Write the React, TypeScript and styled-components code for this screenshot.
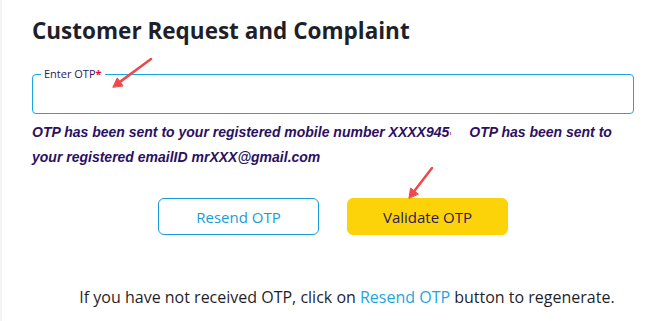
import React from 'react';
import styled, { createGlobalStyle } from 'styled-components';

const GlobalStyle = createGlobalStyle`
  html, body {
    margin: 0;
    padding: 0;
    background: #ffffff;
  }
  body {
    font-family: 'Open Sans', 'Noto Sans', sans-serif;
  }
`;

const Page = styled.div`
  position: relative;
  width: 655px;
  height: 321px;
  box-sizing: border-box;
  border-left: 2px solid #f5f5f5;
  padding: 15px 21px 0 30px;
  overflow: hidden;
`;

const Title = styled.h2`
  margin: 0;
  font-size: 22.5px;
  line-height: 32px;
  font-weight: 700;
  color: #1f1f2b;
`;

const OtpField = styled.fieldset`
  margin: 21px 0 0;
  padding: 0 10px;
  height: 46px;
  box-sizing: border-box;
  border: 1.5px solid #1ba6e0;
  border-radius: 4px;
`;

const Legend = styled.legend`
  padding: 0 3px;
  margin-left: -2px;
  font-size: 11px;
  line-height: 12px;
  color: #2a1a5e;

  span {
    color: #e0103a;
    font-weight: 700;
  }
`;

const Message = styled.p`
  margin: 6px 0 0;
  font-family: 'Liberation Sans', Arial, sans-serif;
  font-style: italic;
  font-weight: 700;
  font-size: 14px;
  line-height: 25px;
  color: #2b1062;

  .tick {
    display: inline-block;
    width: 1px;
    height: 3px;
    margin: 0 1px;
    background: #e06a8a;
    vertical-align: middle;
  }

  .gap {
    display: inline-block;
    width: 17px;
  }
`;

const Actions = styled.div`
  display: flex;
  justify-content: center;
  gap: 28px;
  margin-top: 28px;
`;

const Button = styled.button<{ $primary?: boolean }>`
  width: 161px;
  height: 37px;
  box-sizing: border-box;
  border-radius: 6px;
  font-family: 'Open Sans', 'Noto Sans', sans-serif;
  font-size: 15px;
  cursor: pointer;
  border: 1px solid ${(p) => (p.$primary ? '#fcd308' : '#1a9bd7')};
  background: ${(p) => (p.$primary ? '#fcd308' : '#ffffff')};
  color: ${(p) => (p.$primary ? '#2a1a5e' : '#1a9bd7')};
`;

const Hint = styled.p`
  margin: 51px 0 0;
  padding-left: 28px;
  text-align: center;
  font-size: 16px;
  line-height: 22px;
  color: #1f1f2b;

  a {
    color: #1ba6e0;
    text-decoration: none;
  }
`;

const Annotation = styled.svg`
  position: absolute;
  left: 0;
  top: 0;
  pointer-events: none;
`;

const Arrow = ({ x1, y1, x2, y2 }: { x1: number; y1: number; x2: number; y2: number }) => {
  const a = Math.atan2(y2 - y1, x2 - x1);
  const len = 10;
  const w = 0.5;
  const p1 = [x2 - len * Math.cos(a - w), y2 - len * Math.sin(a - w)];
  const p2 = [x2 - len * Math.cos(a + w), y2 - len * Math.sin(a + w)];
  return (
    <g stroke="#f04848" strokeWidth={2.5} strokeLinecap="round" fill="#f04848">
      <line x1={x1} y1={y1} x2={x2 - 4 * Math.cos(a)} y2={y2 - 4 * Math.sin(a)} />
      <polygon points={`${x2},${y2} ${p1[0]},${p1[1]} ${p2[0]},${p2[1]}`} strokeLinejoin="round" strokeWidth={1} />
    </g>
  );
};

export default function App() {
  return (
    <>
      <GlobalStyle />
      <Page>
        <Title>Customer Request and Complaint</Title>
        <OtpField>
          <Legend>
            Enter OTP<span>*</span>
          </Legend>
        </OtpField>
        <Message>
          OTP has been sent to your registered mobile number XXXX945
          <span className="tick" />
          <span className="gap" />
          OTP has been sent to your registered emailID mrXXX@gmail.com
        </Message>
        <Actions>
          <Button>Resend OTP</Button>
          <Button $primary>Validate OTP</Button>
        </Actions>
        <Hint>
          If you have not received OTP, click on <a href="#">Resend OTP</a> button to regenerate.
        </Hint>
        <Annotation width="655" height="321">
          <Arrow x1={149} y1={59} x2={111} y2={87} />
          <Arrow x1={430} y1={168} x2={407} y2={198} />
        </Annotation>
      </Page>
    </>
  );
}
